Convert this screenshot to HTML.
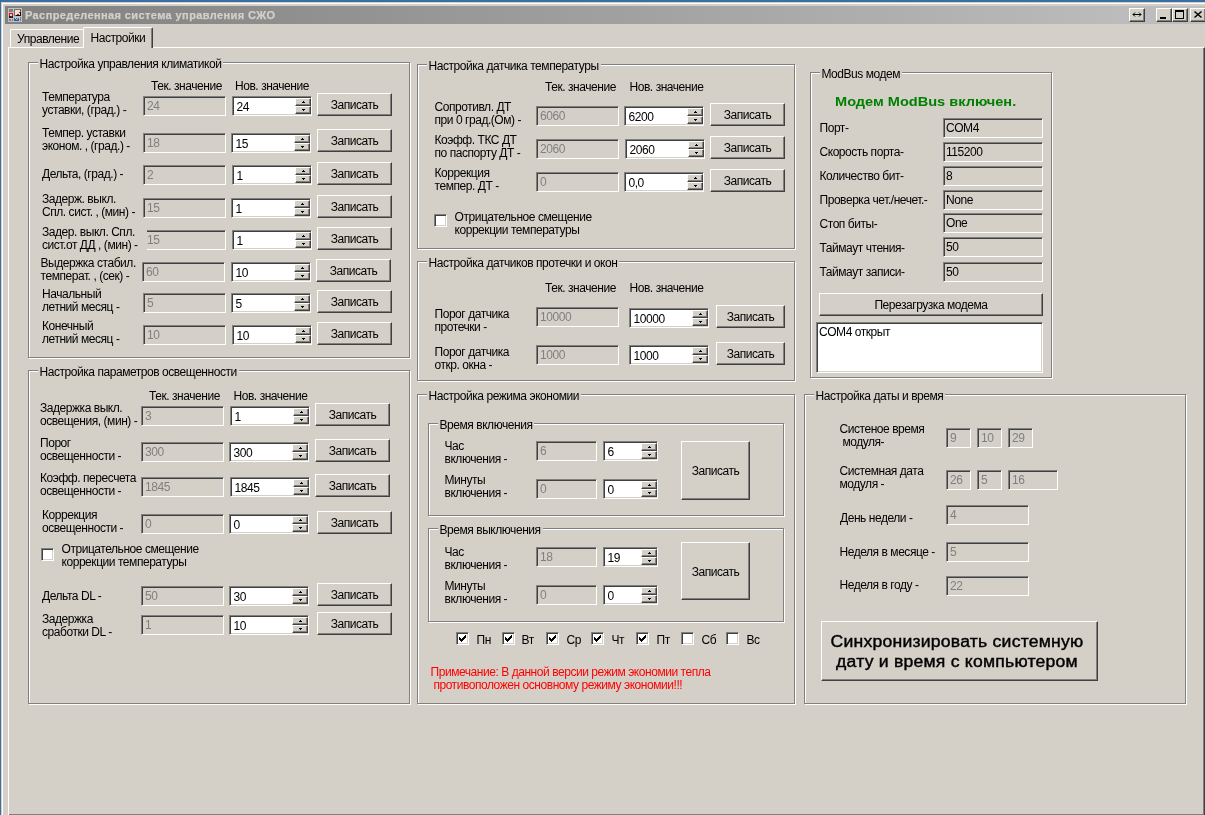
<!DOCTYPE html>
<html lang="ru"><head><meta charset="utf-8"><title>Распределенная система управления СЖО</title>
<style>
html,body{margin:0;padding:0}
body{width:1205px;height:815px;overflow:hidden;background:#d4d0c8;position:relative;font-family:"Liberation Sans",sans-serif;font-size:12px;letter-spacing:-0.45px;line-height:13px;color:#000}
body *{box-sizing:border-box}
#root{position:absolute;left:0;top:0;width:1205px;height:815px;overflow:hidden;will-change:transform;-webkit-font-smoothing:antialiased}
.abs,.l,.tb,.sp,.btn,.gb,.gt,.cb,.grn{position:absolute}
.l{white-space:nowrap}
.l.bg{background:#d4d0c8;z-index:2;overflow:hidden}
.red{color:#ff0000}
.tb{border:1px solid;border-color:#808080 #fff #fff #808080;box-shadow:inset 1px 1px 0 #404040,inset -1px -1px 0 #d4d0c8;background:#d4d0c8;overflow:hidden}
.tb span{position:absolute;left:3px;top:3px;white-space:nowrap}
.tb.d{color:#808080}
.tb.ro{color:#000}
.tb.ro span{left:2px}
.tb.ta{background:#fff}
.sp{height:20px;border:1px solid;border-color:#808080 #fff #fff #808080;box-shadow:inset 1px 1px 0 #404040,inset -1px -1px 0 #d4d0c8;background:#fff;overflow:hidden}
.sp span{position:absolute;left:3.5px;top:4px;white-space:nowrap}
.sp i{position:absolute;right:0;width:16px;height:8px;background:#d4d0c8;border:1px solid;border-color:#fff #404040 #404040 #fff;box-shadow:inset -1px -1px 0 #808080}
.sp i.u{top:1px}
.sp i.dn{top:9px}
.sp i b{position:absolute;left:6px;top:3px;width:3px;height:1px;background:#000}
.sp i b::before{content:"";position:absolute;left:1px;top:-1px;width:1px;height:1px;background:#000}
.sp i.dn b{top:2px}
.sp i.dn b::before{top:1px}
.btn{background:#d4d0c8;border:1px solid;border-color:#fff #404040 #404040 #fff;box-shadow:inset -1px -1px 0 #808080;display:flex;align-items:center;justify-content:center;text-align:center;white-space:nowrap}
.btn span{position:relative;top:1px}
.btn.big{font-size:16px;letter-spacing:0.2px;line-height:20px;-webkit-text-stroke:0.4px #000}
.btn.big span{top:1px;left:-2.5px;transform:scaleX(1.1);display:inline-block}
.gb{border:1px solid #808080;box-shadow:1px 1px 0 #fff,inset 1px 1px 0 #fff}
.gt{background:#d4d0c8;height:13px;white-space:nowrap;padding:0 2px}
.cb{width:13px;height:13px;background:#fff;border:1px solid;border-color:#808080 #fff #fff #808080;box-shadow:inset 1px 1px 0 #404040,inset -1px -1px 0 #d4d0c8}
.cb svg{position:absolute;left:2px;top:2px}
.grn{color:#008000;font-weight:bold;font-size:13px;letter-spacing:0;white-space:nowrap;line-height:16px;transform:scaleX(1.12);transform-origin:0 0}
/* chrome */
#deskT{position:absolute;left:0;top:0;width:1205px;height:2px;background:#3a6ea5}
#deskL{position:absolute;left:0;top:0;width:1px;height:815px;background:#3a6ea5}
#frame{position:absolute;left:1px;top:2px;width:1300px;height:900px;border:1px solid #d4d0c8;box-shadow:inset 1px 1px 0 #fff}
#title{position:absolute;left:5px;top:6px;width:1203px;height:18px;background:linear-gradient(to right,#808080,#c0c0c0)}
#title .t{position:absolute;left:20px;top:2px;color:#d4d0c8;font-weight:bold;font-size:11px;letter-spacing:0.4px;white-space:nowrap;line-height:14px;-webkit-text-stroke:0.25px #d4d0c8}
.capb{position:absolute;top:8px;width:16px;height:14px;background:#d4d0c8;border:1px solid;border-color:#fff #404040 #404040 #fff;box-shadow:inset -1px -1px 0 #808080}
#tabpage{position:absolute;left:8px;top:47px;width:1197px;height:769px;border:1px solid;border-color:#fff #404040 #404040 #fff;box-shadow:inset -1px -1px 0 #808080}
.tab{position:absolute;background:#d4d0c8;border:1px solid;border-color:#fff #404040 transparent #fff;border-bottom:none;box-shadow:inset -1px 0 0 #808080;border-radius:2px 2px 0 0;white-space:nowrap}
.tab span{position:absolute}
.tab.t1{border-right:none;box-shadow:none}
</style></head>
<body>
<div id="root">

<div id="deskT"></div><div id="deskL"></div>
<div id="frame"></div>
<div id="title">
<svg style="position:absolute;left:3px;top:2px" width="14" height="14" viewBox="0 0 14 14">
<rect width="14" height="14" fill="#c0c0c0"/>
<rect x="1" y="1" width="4" height="3" fill="#808080"/>
<rect x="1" y="5" width="4" height="5" fill="#ff0000"/><rect x="2" y="6" width="2" height="3" fill="#c0e0e0"/><rect x="1" y="8" width="4" height="2" fill="#202020"/><rect x="3" y="8" width="1" height="1" fill="#ff0000"/>
<rect x="6" y="1" width="7" height="7" fill="#707070"/><rect x="8" y="7" width="5" height="1" fill="#101010"/><rect x="12" y="4" width="1" height="4" fill="#101010"/><rect x="7" y="2" width="5" height="5" fill="#e4e4dc"/>
<rect x="12" y="2" width="1" height="1" fill="#ff0000"/><rect x="11" y="4" width="1" height="1" fill="#ff0000"/><rect x="9" y="6" width="2" height="1" fill="#ff0000"/>
<rect x="1" y="11" width="2" height="2" fill="#808080"/><rect x="4" y="11" width="1" height="2" fill="#808080"/>
<rect x="6" y="10" width="5" height="3" fill="#2060b0"/><path d="M7 10l1.5 1.5L10.500 10" stroke="#d4d0c8" fill="none"/>
<rect x="12" y="9" width="1" height="4" fill="#808080"/>
</svg>
<div class="t">Распределенная система управления СЖО</div>
</div>
<div class="capb" style="left:1129px"><svg width="14" height="12" viewBox="0 0 14 12" style="position:absolute;left:0;top:0"><path d="M3 5.500h8M5 3.500L3 5.500L5 7.500M9 3.500L11 5.500L9 7.500" stroke="#000" fill="none" stroke-width="1"/></svg></div>
<div class="capb" style="left:1156px"><div style="position:absolute;left:3px;top:8px;width:6px;height:2px;background:#000"></div></div>
<div class="capb" style="left:1172px"><div style="position:absolute;left:2px;top:1px;width:9px;height:9px;border:1px solid #000;border-top-width:2px"></div></div>
<div class="capb" style="left:1190px"><svg width="14" height="12" viewBox="0 0 14 12" style="position:absolute;left:0;top:0"><path d="M3.500 2.500l7 6M10.500 2.500l-7 6" stroke="#000" stroke-width="1.500" fill="none"/></svg></div>
<div id="tabpage"></div>
<div class="tab t1" style="left:10px;top:29px;width:74px;height:18px"><span style="left:6px;top:3px">Управление</span></div>
<div class="tab" style="left:83px;top:27px;width:70px;height:21px"><span style="left:6.5px;top:3.5px">Настройки</span></div>

<div class="gb" style="left:28px;top:62px;width:382px;height:296px"></div>
<div class="gt" style="left:37.5px;top:58px">Настройка управления климатикой</div>
<div class="l " style="left:151px;top:80px;">Тек. значение</div>
<div class="l " style="left:235px;top:80px;">Нов. значение</div>
<div class="tb d" style="left:143px;top:96px;width:83px;height:20px"><span>24</span></div>
<div class="l " style="left:42px;top:91px;">Температура<br>уставки, (град.) -</div>
<div class="sp" style="left:232px;top:96px;width:80px"><span>24</span><i class="u"><b></b></i><i class="dn"><b></b></i></div>
<div class="btn " style="left:317px;top:93px;width:75px;height:23px"><span>Записать</span></div>
<div class="tb d" style="left:143px;top:133px;width:83px;height:20px"><span>18</span></div>
<div class="l " style="left:42px;top:127px;">Темпер. уставки<br>эконом. , (град.) -</div>
<div class="sp" style="left:231px;top:133px;width:80px"><span>15</span><i class="u"><b></b></i><i class="dn"><b></b></i></div>
<div class="btn " style="left:317px;top:129px;width:75px;height:23px"><span>Записать</span></div>
<div class="tb d" style="left:143px;top:165px;width:83px;height:20px"><span>2</span></div>
<div class="l " style="left:42px;top:168px;">Дельта, (град.) -</div>
<div class="sp" style="left:232px;top:165px;width:80px"><span>1</span><i class="u"><b></b></i><i class="dn"><b></b></i></div>
<div class="btn " style="left:317px;top:162px;width:75px;height:23px"><span>Записать</span></div>
<div class="tb d" style="left:143px;top:198px;width:83px;height:20px"><span>15</span></div>
<div class="l " style="left:42px;top:193px;">Задерж. выкл.<br>Спл. сист. , (мин) -</div>
<div class="sp" style="left:231px;top:198px;width:80px"><span>1</span><i class="u"><b></b></i><i class="dn"><b></b></i></div>
<div class="btn " style="left:317px;top:195px;width:75px;height:23px"><span>Записать</span></div>
<div class="tb d" style="left:143px;top:230px;width:83px;height:20px"><span>15</span></div>
<div class="l bg" style="left:42px;top:225.5px;width:105px;">Задер. выкл. Спл.<br>сист.от ДД , (мин) -</div>
<div class="sp" style="left:232px;top:230px;width:80px"><span>1</span><i class="u"><b></b></i><i class="dn"><b></b></i></div>
<div class="btn " style="left:317px;top:227px;width:75px;height:23px"><span>Записать</span></div>
<div class="tb d" style="left:142px;top:262px;width:83px;height:20px"><span>60</span></div>
<div class="l " style="left:40.5px;top:257px;">Выдержка стабил.<br>температ. , (сек) -</div>
<div class="sp" style="left:231px;top:262px;width:80px"><span>10</span><i class="u"><b></b></i><i class="dn"><b></b></i></div>
<div class="btn " style="left:316px;top:259px;width:75px;height:23px"><span>Записать</span></div>
<div class="tb d" style="left:143px;top:293px;width:83px;height:20px"><span>5</span></div>
<div class="l " style="left:42px;top:288px;">Начальный<br>летний месяц -</div>
<div class="sp" style="left:231px;top:293px;width:80px"><span>5</span><i class="u"><b></b></i><i class="dn"><b></b></i></div>
<div class="btn " style="left:317px;top:290px;width:75px;height:23px"><span>Записать</span></div>
<div class="tb d" style="left:143px;top:325px;width:83px;height:20px"><span>10</span></div>
<div class="l " style="left:42px;top:320px;">Конечный<br>летний месяц -</div>
<div class="sp" style="left:232px;top:325px;width:80px"><span>10</span><i class="u"><b></b></i><i class="dn"><b></b></i></div>
<div class="btn " style="left:317px;top:322px;width:75px;height:23px"><span>Записать</span></div>
<div class="gb" style="left:28px;top:370px;width:382px;height:334px"></div>
<div class="gt" style="left:37.5px;top:366px">Настройка параметров освещенности</div>
<div class="l " style="left:149px;top:389.5px;">Тек. значение</div>
<div class="l " style="left:233.5px;top:389.5px;">Нов. значение</div>
<div class="tb d" style="left:141px;top:406px;width:83px;height:20px"><span>3</span></div>
<div class="l " style="left:40px;top:401.5px;">Задержка выкл.<br>освещения, (мин) -</div>
<div class="sp" style="left:230px;top:406px;width:80px"><span>1</span><i class="u"><b></b></i><i class="dn"><b></b></i></div>
<div class="btn " style="left:315px;top:403px;width:75px;height:23px"><span>Записать</span></div>
<div class="tb d" style="left:141px;top:442px;width:83px;height:20px"><span>300</span></div>
<div class="l " style="left:40px;top:437px;">Порог<br>освещенности -</div>
<div class="sp" style="left:229px;top:442px;width:80px"><span>300</span><i class="u"><b></b></i><i class="dn"><b></b></i></div>
<div class="btn " style="left:315px;top:439px;width:75px;height:23px"><span>Записать</span></div>
<div class="tb d" style="left:141px;top:477px;width:83px;height:20px"><span>1845</span></div>
<div class="l " style="left:40px;top:472px;">Коэфф. пересчета<br>освещенности -</div>
<div class="sp" style="left:230px;top:477px;width:80px"><span>1845</span><i class="u"><b></b></i><i class="dn"><b></b></i></div>
<div class="btn " style="left:315px;top:474px;width:75px;height:23px"><span>Записать</span></div>
<div class="tb d" style="left:141px;top:514px;width:83px;height:20px"><span>0</span></div>
<div class="l " style="left:42px;top:509px;">Коррекция<br>освещенности -</div>
<div class="sp" style="left:229px;top:514px;width:80px"><span>0</span><i class="u"><b></b></i><i class="dn"><b></b></i></div>
<div class="btn " style="left:317px;top:511px;width:75px;height:23px"><span>Записать</span></div>
<div class="tb d" style="left:141px;top:586px;width:83px;height:20px"><span>50</span></div>
<div class="l " style="left:42px;top:590px;">Дельта DL -</div>
<div class="sp" style="left:229px;top:586px;width:80px"><span>30</span><i class="u"><b></b></i><i class="dn"><b></b></i></div>
<div class="btn " style="left:317px;top:583px;width:75px;height:23px"><span>Записать</span></div>
<div class="tb d" style="left:141px;top:615px;width:83px;height:20px"><span>1</span></div>
<div class="l " style="left:42px;top:613px;">Задержка<br>сработки DL -</div>
<div class="sp" style="left:229px;top:615px;width:80px"><span>10</span><i class="u"><b></b></i><i class="dn"><b></b></i></div>
<div class="btn " style="left:317px;top:612px;width:75px;height:23px"><span>Записать</span></div>
<div class="cb" style="left:41px;top:548px"></div>
<div class="l " style="left:61.5px;top:543px;">Отрицательное смещение<br>коррекции температуры</div>
<div class="gb" style="left:417px;top:64px;width:378px;height:185px"></div>
<div class="gt" style="left:426.5px;top:60px">Настройка датчика температуры</div>
<div class="l " style="left:545px;top:81px;">Тек. значение</div>
<div class="l " style="left:629.5px;top:81px;">Нов. значение</div>
<div class="tb d" style="left:536px;top:106px;width:83px;height:20px"><span>6060</span></div>
<div class="l " style="left:434.5px;top:101px;">Сопротивл. ДТ<br>при 0 град.(Ом) -</div>
<div class="sp" style="left:624px;top:106px;width:80px"><span>6200</span><i class="u"><b></b></i><i class="dn"><b></b></i></div>
<div class="btn " style="left:710px;top:103px;width:75px;height:23px"><span>Записать</span></div>
<div class="tb d" style="left:536px;top:139px;width:83px;height:20px"><span>2060</span></div>
<div class="l " style="left:434.5px;top:134px;">Коэфф. ТКС ДТ<br>по паспорту ДТ -</div>
<div class="sp" style="left:625px;top:139px;width:80px"><span>2060</span><i class="u"><b></b></i><i class="dn"><b></b></i></div>
<div class="btn " style="left:710px;top:136px;width:75px;height:23px"><span>Записать</span></div>
<div class="tb d" style="left:536px;top:172px;width:83px;height:20px"><span>0</span></div>
<div class="l " style="left:434.5px;top:167px;">Коррекция<br>темпер. ДТ -</div>
<div class="sp" style="left:624px;top:172px;width:80px"><span>0,0</span><i class="u"><b></b></i><i class="dn"><b></b></i></div>
<div class="btn " style="left:710px;top:169px;width:75px;height:23px"><span>Записать</span></div>
<div class="cb" style="left:434px;top:214px"></div>
<div class="l " style="left:454.5px;top:210.5px;">Отрицательное смещение<br>коррекции температуры</div>
<div class="gb" style="left:417px;top:261px;width:378px;height:120px"></div>
<div class="gt" style="left:426.5px;top:257px">Настройка датчиков протечки и окон</div>
<div class="l " style="left:545px;top:281.5px;">Тек. значение</div>
<div class="l " style="left:629.5px;top:281.5px;">Нов. значение</div>
<div class="tb d" style="left:536px;top:307px;width:83px;height:20px"><span>10000</span></div>
<div class="l " style="left:434.5px;top:307.5px;">Порог датчика<br>протечки -</div>
<div class="sp" style="left:629px;top:308px;width:80px"><span>10000</span><i class="u"><b></b></i><i class="dn"><b></b></i></div>
<div class="btn " style="left:716px;top:305px;width:69px;height:23px"><span>Записать</span></div>
<div class="tb d" style="left:536px;top:345px;width:83px;height:20px"><span>1000</span></div>
<div class="l " style="left:434.5px;top:346px;">Порог датчика<br>откр. окна -</div>
<div class="sp" style="left:629px;top:345px;width:80px"><span>1000</span><i class="u"><b></b></i><i class="dn"><b></b></i></div>
<div class="btn " style="left:716px;top:342px;width:69px;height:23px"><span>Записать</span></div>
<div class="gb" style="left:417px;top:394px;width:378px;height:310px"></div>
<div class="gt" style="left:426.5px;top:390px">Настройка режима экономии</div>
<div class="gb" style="left:428px;top:423px;width:356px;height:93px"></div>
<div class="gt" style="left:437.5px;top:419px">Время включения</div>
<div class="gb" style="left:428px;top:528px;width:356px;height:94px"></div>
<div class="gt" style="left:437.5px;top:524px">Время выключения</div>
<div class="l " style="left:444.5px;top:440px;">Час<br>включения -</div>
<div class="tb d" style="left:536px;top:441px;width:61px;height:20px"><span>6</span></div>
<div class="sp" style="left:603px;top:441px;width:55px"><span>6</span><i class="u"><b></b></i><i class="dn"><b></b></i></div>
<div class="l " style="left:444.5px;top:474px;">Минуты<br>включения -</div>
<div class="tb d" style="left:536px;top:479px;width:61px;height:20px"><span>0</span></div>
<div class="sp" style="left:603px;top:479px;width:55px"><span>0</span><i class="u"><b></b></i><i class="dn"><b></b></i></div>
<div class="btn " style="left:681px;top:441px;width:69px;height:59px"><span>Записать</span></div>
<div class="l " style="left:444.5px;top:545.5px;">Час<br>включения -</div>
<div class="tb d" style="left:536px;top:547px;width:61px;height:20px"><span>18</span></div>
<div class="sp" style="left:603px;top:547px;width:55px"><span>19</span><i class="u"><b></b></i><i class="dn"><b></b></i></div>
<div class="l " style="left:444.5px;top:580px;">Минуты<br>включения -</div>
<div class="tb d" style="left:536px;top:585px;width:61px;height:20px"><span>0</span></div>
<div class="sp" style="left:603px;top:585px;width:55px"><span>0</span><i class="u"><b></b></i><i class="dn"><b></b></i></div>
<div class="btn " style="left:681px;top:542px;width:69px;height:58px"><span>Записать</span></div>
<div class="cb" style="left:456px;top:632px"><svg width="7" height="7" viewBox="0 0 7 7" shape-rendering="crispEdges"><path d="M0 2h1v1h1v1h1v-1h1v-1h1v-1h1v-1h1v3h-1v1h-1v1h-1v1h-1v1h-1v-1h-1v-1h-1z" fill="#000"/></svg></div>
<div class="l " style="left:476.5px;top:633.5px;">Пн</div>
<div class="cb" style="left:502px;top:632px"><svg width="7" height="7" viewBox="0 0 7 7" shape-rendering="crispEdges"><path d="M0 2h1v1h1v1h1v-1h1v-1h1v-1h1v-1h1v3h-1v1h-1v1h-1v1h-1v1h-1v-1h-1v-1h-1z" fill="#000"/></svg></div>
<div class="l " style="left:521.5px;top:633.5px;">Вт</div>
<div class="cb" style="left:546px;top:632px"><svg width="7" height="7" viewBox="0 0 7 7" shape-rendering="crispEdges"><path d="M0 2h1v1h1v1h1v-1h1v-1h1v-1h1v-1h1v3h-1v1h-1v1h-1v1h-1v1h-1v-1h-1v-1h-1z" fill="#000"/></svg></div>
<div class="l " style="left:566.5px;top:633.5px;">Ср</div>
<div class="cb" style="left:591px;top:632px"><svg width="7" height="7" viewBox="0 0 7 7" shape-rendering="crispEdges"><path d="M0 2h1v1h1v1h1v-1h1v-1h1v-1h1v-1h1v3h-1v1h-1v1h-1v1h-1v1h-1v-1h-1v-1h-1z" fill="#000"/></svg></div>
<div class="l " style="left:611.5px;top:633.5px;">Чт</div>
<div class="cb" style="left:636px;top:632px"><svg width="7" height="7" viewBox="0 0 7 7" shape-rendering="crispEdges"><path d="M0 2h1v1h1v1h1v-1h1v-1h1v-1h1v-1h1v3h-1v1h-1v1h-1v1h-1v1h-1v-1h-1v-1h-1z" fill="#000"/></svg></div>
<div class="l " style="left:656.5px;top:633.5px;">Пт</div>
<div class="cb" style="left:681px;top:632px"></div>
<div class="l " style="left:701.5px;top:633.5px;">Сб</div>
<div class="cb" style="left:726px;top:632px"></div>
<div class="l " style="left:746.5px;top:633.5px;">Вс</div>
<div class="l red" style="left:430.5px;top:666px;">Примечание: В данной версии режим экономии тепла<br>&nbsp;противоположен основному режиму экономии!!!</div>
<div class="gb" style="left:810px;top:72px;width:242px;height:306px"></div>
<div class="gt" style="left:819.5px;top:68px">ModBus модем</div>
<div class="grn" style="left:834.5px;top:93.5px">Модем ModBus включен.</div>
<div class="l " style="left:819.5px;top:121.5px;">Порт-</div>
<div class="tb ro" style="left:943px;top:118px;width:100px;height:20px"><span>COM4</span></div>
<div class="l " style="left:819.5px;top:145.5px;">Скорость порта-</div>
<div class="tb ro" style="left:943px;top:142px;width:100px;height:20px"><span>115200</span></div>
<div class="l " style="left:819.5px;top:169.5px;">Количество бит-</div>
<div class="tb ro" style="left:943px;top:166px;width:100px;height:20px"><span>8</span></div>
<div class="l " style="left:819.5px;top:193.5px;">Проверка чет./нечет.-</div>
<div class="tb ro" style="left:943px;top:190px;width:100px;height:20px"><span>None</span></div>
<div class="l " style="left:819.5px;top:218px;">Стоп биты-</div>
<div class="tb ro" style="left:943px;top:213px;width:100px;height:20px"><span>One</span></div>
<div class="l " style="left:819.5px;top:241.5px;">Таймаут чтения-</div>
<div class="tb ro" style="left:943px;top:237px;width:100px;height:20px"><span>50</span></div>
<div class="l " style="left:819.5px;top:265.5px;">Таймаут записи-</div>
<div class="tb ro" style="left:943px;top:262px;width:100px;height:20px"><span>50</span></div>
<div class="btn " style="left:819px;top:293px;width:224px;height:23px"><span>Перезагрузка модема</span></div>
<div class="tb ta" style="left:816px;top:322px;width:227px;height:51px"><span style="left:2px">COM4 открыт</span></div>
<div class="gb" style="left:804px;top:394px;width:382px;height:310px"></div>
<div class="gt" style="left:813.5px;top:390px">Настройка даты и время</div>
<div class="l " style="left:839.5px;top:423px;">Систеное время<br>&nbsp;модуля-</div>
<div class="tb d" style="left:946px;top:428px;width:25px;height:20px"><span>9</span></div>
<div class="tb d" style="left:977px;top:428px;width:25px;height:20px"><span>10</span></div>
<div class="tb d" style="left:1008px;top:428px;width:25px;height:20px"><span>29</span></div>
<div class="l " style="left:839.5px;top:464.5px;">Системная дата<br>модуля -</div>
<div class="tb d" style="left:946px;top:470px;width:25px;height:20px"><span>26</span></div>
<div class="tb d" style="left:977px;top:470px;width:25px;height:20px"><span>5</span></div>
<div class="tb d" style="left:1008px;top:470px;width:50px;height:20px"><span>16</span></div>
<div class="l " style="left:840px;top:512px;">День недели -</div>
<div class="tb d" style="left:946px;top:505px;width:83px;height:20px"><span>4</span></div>
<div class="l " style="left:839.5px;top:546px;">Неделя в месяце -</div>
<div class="tb d" style="left:946px;top:542px;width:83px;height:20px"><span>5</span></div>
<div class="l " style="left:839.5px;top:578.5px;">Неделя в году -</div>
<div class="tb d" style="left:946px;top:576px;width:83px;height:20px"><span>22</span></div>
<div class="btn big" style="left:821px;top:621px;width:277px;height:60px"><span>Синхронизировать системную<br>дату и время с компьютером</span></div>
</div>
</body></html>
